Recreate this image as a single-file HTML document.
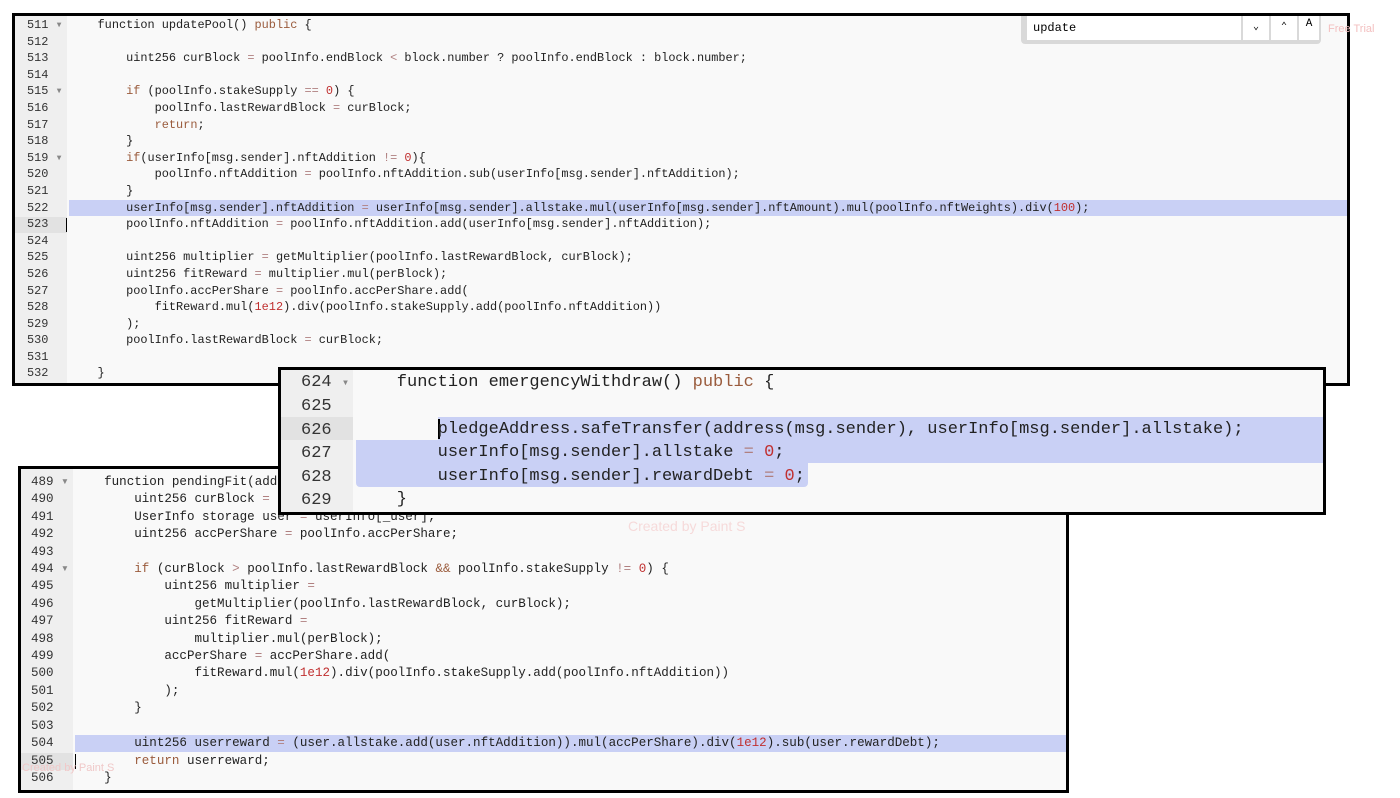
<!DOCTYPE html>
<html><head><meta charset="utf-8"><style>
body{margin:0;width:1400px;height:798px;background:#fff;position:relative;overflow:hidden;font-family:"Liberation Mono",monospace;}
.p{position:absolute;border:3px solid #000;background:#f9f9f9;overflow:hidden;box-sizing:border-box;}
.g{position:absolute;left:0;top:0;bottom:0;background:#efefef;}
.r{position:absolute;left:0;right:0;white-space:pre;color:#222;}
.n{position:absolute;color:#333;white-space:pre;}
.a{color:#888}
.k{color:#9a5b3c}.d{color:#c03030}.o{color:#b08080}
.hl{position:absolute;background:#c9d0f5;}
</style></head><body>

<!-- Panel 1 -->
<div class="p" style="left:12px;top:13px;width:1338px;height:373px;font-size:11.9px;">
<div class="g" style="width:52px"></div>
<div class="hl" style="left:54px;right:0;top:184px;height:16px"></div>
<div style="position:absolute;left:0;top:201px;width:52px;height:16px;background:#e2e2e2"></div>
<div style="position:absolute;left:51px;top:202px;width:1px;height:14px;background:#000"></div>
<div class="n" style="left:12px;top:1px;line-height:16.6px">511 <span class="a">▾</span>
512
513
514
515 <span class="a">▾</span>
516
517
518
519 <span class="a">▾</span>
520
521
522
523
524
525
526
527
528
529
530
531
532</div>
<div class="r" style="left:54px;top:1px;line-height:16.6px">    function updatePool() <span class="k">public</span> {

        uint256 curBlock <span class="o">=</span> poolInfo.endBlock <span class="o">&lt;</span> block.number ? poolInfo.endBlock : block.number;

        <span class="k">if</span> (poolInfo.stakeSupply <span class="o">==</span> <span class="d">0</span>) {
            poolInfo.lastRewardBlock <span class="o">=</span> curBlock;
            <span class="k">return</span>;
        }
        <span class="k">if</span>(userInfo[msg.sender].nftAddition <span class="o">!=</span> <span class="d">0</span>){
            poolInfo.nftAddition <span class="o">=</span> poolInfo.nftAddition.sub(userInfo[msg.sender].nftAddition);
        }
        userInfo[msg.sender].nftAddition <span class="o">=</span> userInfo[msg.sender].allstake.mul(userInfo[msg.sender].nftAmount).mul(poolInfo.nftWeights).div(<span class="d">100</span>);
        poolInfo.nftAddition <span class="o">=</span> poolInfo.nftAddition.add(userInfo[msg.sender].nftAddition);

        uint256 multiplier <span class="o">=</span> getMultiplier(poolInfo.lastRewardBlock, curBlock);
        uint256 fitReward <span class="o">=</span> multiplier.mul(perBlock);
        poolInfo.accPerShare <span class="o">=</span> poolInfo.accPerShare.add(
            fitReward.mul(<span class="d">1e12</span>).div(poolInfo.stakeSupply.add(poolInfo.nftAddition))
        );
        poolInfo.lastRewardBlock <span class="o">=</span> curBlock;

    }</div>
<div style="position:absolute;left:1006px;top:0;width:300px;height:28px;background:#d9d9d9;border-radius:0 0 4px 4px"></div>
<div style="position:absolute;left:1012px;top:0;width:214px;height:24px;background:#fff;font-size:12px;line-height:24px;padding-left:6px;box-sizing:border-box">update</div>
<div style="position:absolute;left:1228px;top:0;width:26px;height:24px;background:#fff;font-size:10px;line-height:24px;text-align:center">⌄</div>
<div style="position:absolute;left:1256px;top:0;width:26px;height:24px;background:#fff;font-size:10px;line-height:24px;text-align:center">⌃</div>
<div style="position:absolute;left:1284px;top:0;width:20px;height:24px;background:#fff;font-size:11px;line-height:16px;text-align:center">A</div>
</div>
<div style="position:absolute;left:1328px;top:23px;font-family:'Liberation Sans',sans-serif;font-size:11px;color:#f3c0c0">Free Trial</div>

<!-- Panel 3 -->
<div class="p" style="left:18px;top:466px;width:1051px;height:327px;font-size:12.55px;">
<div class="g" style="width:52px"></div>
<div class="hl" style="left:54px;right:0;top:266px;height:17px"></div>
<div style="position:absolute;left:0;top:284px;width:52px;height:17px;background:#e2e2e2"></div>
<div style="position:absolute;left:54px;top:285px;width:1px;height:15px;background:#000"></div>
<div class="n" style="left:10px;top:5px;line-height:17.4px">489 <span class="a">▾</span>
490
491
492
493
494 <span class="a">▾</span>
495
496
497
498
499
500
501
502
503
504
505
506</div>
<div class="r" style="left:53px;top:5px;line-height:17.4px">    function pendingFit(address _user) external view returns (uint256) {
        uint256 curBlock <span class="o">=</span> poolInfo.endBlock &lt; block.number ? poolInfo.endBlock : block.number;
        UserInfo storage user <span class="o">=</span> userInfo[_user];
        uint256 accPerShare <span class="o">=</span> poolInfo.accPerShare;

        <span class="k">if</span> (curBlock <span class="o">&gt;</span> poolInfo.lastRewardBlock <span class="k">&amp;&amp;</span> poolInfo.stakeSupply <span class="o">!=</span> <span class="d">0</span>) {
            uint256 multiplier <span class="o">=</span>
                getMultiplier(poolInfo.lastRewardBlock, curBlock);
            uint256 fitReward <span class="o">=</span>
                multiplier.mul(perBlock);
            accPerShare <span class="o">=</span> accPerShare.add(
                fitReward.mul(<span class="d">1e12</span>).div(poolInfo.stakeSupply.add(poolInfo.nftAddition))
            );
        }

        uint256 userreward <span class="o">=</span> (user.allstake.add(user.nftAddition)).mul(accPerShare).div(<span class="d">1e12</span>).sub(user.rewardDebt);
        <span class="k">return</span> userreward;
    }</div>
</div>
<div style="position:absolute;left:22px;top:762px;font-family:'Liberation Sans',sans-serif;font-size:11px;color:#f0c8c8">Created by Paint S</div>

<!-- Panel 2 -->
<div class="p" style="left:278px;top:367px;width:1048px;height:148px;font-size:17px;">
<div class="g" style="width:72px"></div>
<div style="position:absolute;left:0;top:47px;width:72px;height:23px;background:#e2e2e2"></div>
<div class="hl" style="left:157px;right:0;top:47px;height:23px"></div>
<div class="hl" style="left:75px;right:0;top:70px;height:23px"></div>
<div class="hl" style="left:75px;width:452px;top:93px;height:24px;border-radius:0 0 4px 4px"></div>
<div style="position:absolute;left:157px;top:49px;width:2px;height:20px;background:#000"></div>
<div class="n" style="left:20px;top:1px;line-height:23.4px">624 <span class="a" style="font-size:12px">▾</span>
625
626
627
628
629</div>
<div class="r" style="left:75px;top:1px;line-height:23.4px">    function emergencyWithdraw() <span class="k">public</span> {

        pledgeAddress.safeTransfer(address(msg.sender), userInfo[msg.sender].allstake);
        userInfo[msg.sender].allstake <span class="o">=</span> <span class="d">0</span>;
        userInfo[msg.sender].rewardDebt <span class="o">=</span> <span class="d">0</span>;
    }</div>
</div>
<div style="position:absolute;left:628px;top:518px;font-family:'Liberation Sans',sans-serif;font-size:14px;color:#f6dada">Created by Paint S</div>
</body></html>
